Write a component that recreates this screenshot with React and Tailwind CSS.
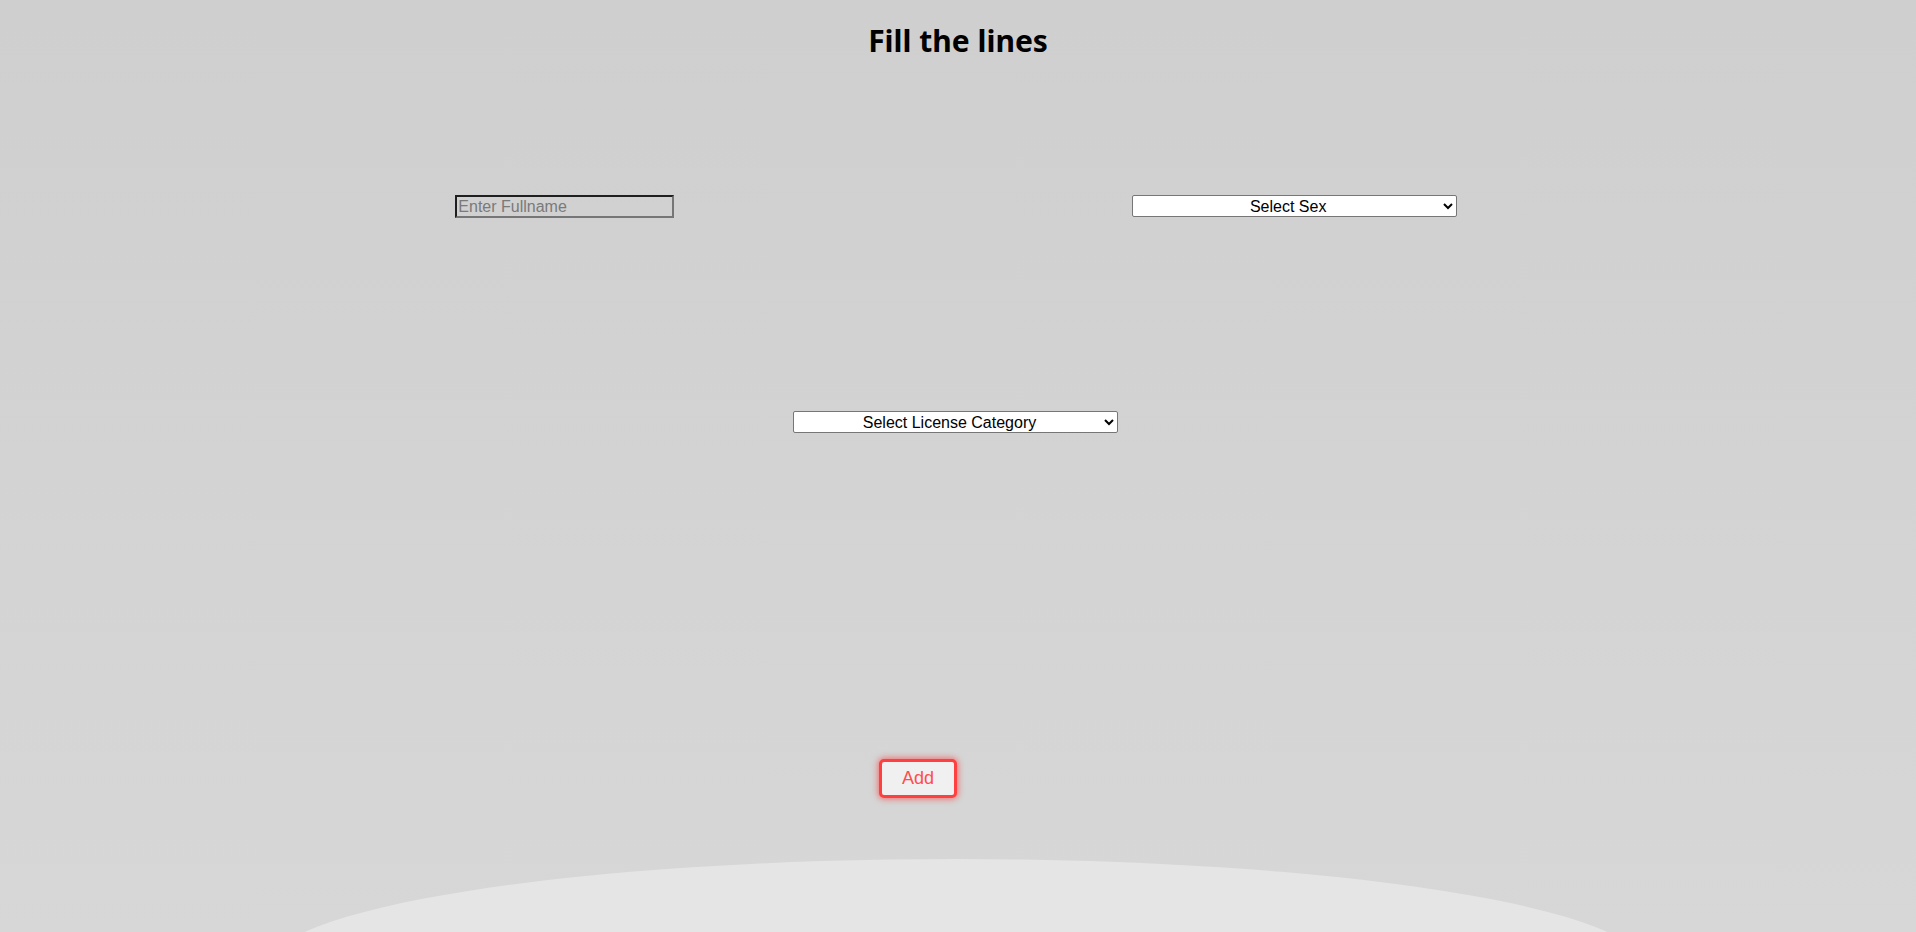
import React, { useState } from 'react';

const App = () => {
    const [fullname, setFullname] = useState('');
    const [sex, setSex] = useState('');
    const [category, setCategory] = useState('');

    return (
        <div className="relative h-[932px] overflow-hidden bg-gradient-to-b from-[#cfcfcf] to-[#d7d7d7] font-['Liberation_Sans',Arial,sans-serif]">
            {/* soft light ellipse at the bottom */}
            <div className="absolute left-[266px] top-[859px] w-[1380px] h-[218px] rounded-[50%] bg-[#e5e5e5]" />

            <div className="relative flex flex-col">
                <h1 className="pt-[22px] text-center text-[30px] leading-[38px] font-bold text-black font-['Noto_Sans','Open_Sans',sans-serif]">
                    Fill the lines
                </h1>

                <div className="mt-[135px] ml-[-2px] mr-[2px] flex justify-evenly items-start">
                    <input
                        type="text"
                        value={fullname}
                        onChange={(e) => setFullname(e.target.value)}
                        placeholder="Enter Fullname"
                        className="w-[219px] h-[23px] px-[1px] border-2 border-t-[#1f1f1f] border-l-[#1f1f1f] border-r-[#767676] border-b-[#767676] bg-transparent text-[16px] text-black placeholder:text-[#7a7a7a] outline-none"
                    />
                    <select
                        value={sex}
                        onChange={(e) => setSex(e.target.value)}
                        className="w-[325px] h-[22px] border border-[#767676] rounded-[2px] bg-white text-[16px] text-black text-center [text-align-last:center]"
                    >
                        <option value="">Select Sex</option>
                        <option value="male">Male</option>
                        <option value="female">Female</option>
                    </select>
                </div>

                <div className="mt-[193px] flex justify-center">
                    <select
                        value={category}
                        onChange={(e) => setCategory(e.target.value)}
                        className="w-[325px] h-[22px] ml-[-5px] border border-[#767676] rounded-[2px] bg-white text-[16px] text-black text-center [text-align-last:center]"
                    >
                        <option value="">Select License Category</option>
                        <option value="A">A</option>
                        <option value="B">B</option>
                        <option value="C">C</option>
                    </select>
                </div>

                <div className="mt-[326px] flex justify-center pr-[80px]">
                    <button className="w-[78px] h-[39px] border-[3px] border-[#ff4040] rounded-[5px] bg-[#f0f0f0] text-[18px] text-[#ff4d4d] shadow-[0_0_6px_1px_rgba(255,40,40,0.6)]">
                        Add
                    </button>
                </div>
            </div>
        </div>
    );
};

export default App;
